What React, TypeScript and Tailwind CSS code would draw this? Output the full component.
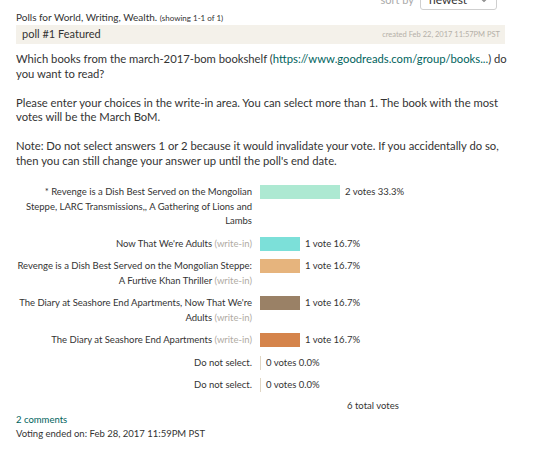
import React from "react";

type Row = {
  label: React.ReactNode;
  votes: number;
  text: string;
  color?: string;
};

const WriteIn = () => <span className="text-[#b0aba3]"> (write-in)</span>;

const rows: Row[] = [
  {
    label: <>* Revenge is a Dish Best Served on the Mongolian Steppe, LARC Transmissions,, A Gathering of Lions and Lambs</>,
    votes: 2,
    text: "2 votes 33.3%",
    color: "bg-[#ade9d2]",
  },
  {
    label: <>Now That We're Adults<WriteIn /></>,
    votes: 1,
    text: "1 vote 16.7%",
    color: "bg-[#7ce0d9]",
  },
  {
    label: <>Revenge is a Dish Best Served on the Mongolian Steppe: A Furtive Khan Thriller<WriteIn /></>,
    votes: 1,
    text: "1 vote 16.7%",
    color: "bg-[#e6b47d]",
  },
  {
    label: <>The Diary at Seashore End Apartments, Now That We're Adults<WriteIn /></>,
    votes: 1,
    text: "1 vote 16.7%",
    color: "bg-[#9a8166]",
  },
  {
    label: <>The Diary at Seashore End Apartments<WriteIn /></>,
    votes: 1,
    text: "1 vote 16.7%",
    color: "bg-[#d5844b]",
  },
  { label: <>Do not select.</>, votes: 0, text: "0 votes 0.0%" },
  { label: <>Do not select.</>, votes: 0, text: "0 votes 0.0%" },
];

export default function App() {
  return (
    <div className="w-[540px] h-[455px] overflow-hidden bg-white text-[#333] font-['Lato','Liberation_Sans',sans-serif]">
      <div className="pl-4 w-[512px]">
        {/* sort row */}
        <div className="flex items-center justify-end gap-[6px] mt-[-11px] h-[22px] pr-[15px]">
          <span className="text-[11px] text-[#aaa]">sort by</span>
          <div className="flex items-center justify-between w-[77px] h-[20px] border border-[#cfcfcf] rounded-[3px] px-[8px] bg-white">
            <span className="text-[12px] text-[#333]">newest</span>
            <svg width="8" height="6" viewBox="0 0 8 6" className="text-[#888]">
              <path d="M1 1.5 L4 4.5 L7 1.5" fill="none" stroke="currentColor" strokeWidth="1.2" />
            </svg>
          </div>
        </div>

        <div className="h-[12px] leading-[12px] text-[10px] whitespace-nowrap">
          Polls for World, Writing, Wealth. <span className="text-[8px]">(showing 1-1 of 1)</span>
        </div>

        <div className="mt-[2px] w-[489px] h-[19px] bg-[#f4f1ea] flex items-center justify-between pl-[6px] pr-[5px]">
          <span className="text-[11px] text-[#333]">poll #1 Featured</span>
          <span className="text-[7.5px] text-[#b5b0a8]">created Feb 22, 2017 11:57PM PST</span>
        </div>

        <div className="mt-[8px] text-[11.25px] leading-[14.5px] text-[#333]">
          <p>
            Which books from the march-2017-bom bookshelf (
            <span className="text-[#00635d]">https://www.goodreads.com/group/books...</span>) do you want to read?
          </p>
          <p className="mt-[14.5px]">
            Please enter your choices in the write-in area. You can select more than 1. The book with the most votes will be the March BoM.
          </p>
          <p className="mt-[14.5px]">
            Note: Do not select answers 1 or 2 because it would invalidate your vote. If you accidentally do so, then you can still change your answer up until the poll's end date.
          </p>
        </div>

        <div className="mt-[17px] ml-[-2px] flex flex-col gap-[8px]">
          {rows.map((r, i) => (
            <div key={i} className="flex items-start">
              <div className="w-[238px] text-right text-[9.5px] leading-[14.5px] text-[#333]">{r.label}</div>
              <div className="ml-[8px] flex items-start">
                {r.votes > 0 ? (
                  <div className={`${r.color} h-[14px]`} style={{ width: r.votes * 40 }} />
                ) : (
                  <div className="w-px h-[14px] bg-[#e0d6c4]" />
                )}
                <span className="ml-[5px] text-[9.5px] leading-[14.5px] whitespace-nowrap">{r.text}</span>
              </div>
            </div>
          ))}
        </div>

        <div className="mt-[6px] pl-[331px] text-[9.5px] leading-[14px]">6 total votes</div>
        <div className="text-[9.5px] leading-[14px] text-[#00635d]">2 comments</div>
        <div className="text-[9.5px] leading-[14px]">Voting ended on: Feb 28, 2017 11:59PM PST</div>
      </div>
    </div>
  );
}
